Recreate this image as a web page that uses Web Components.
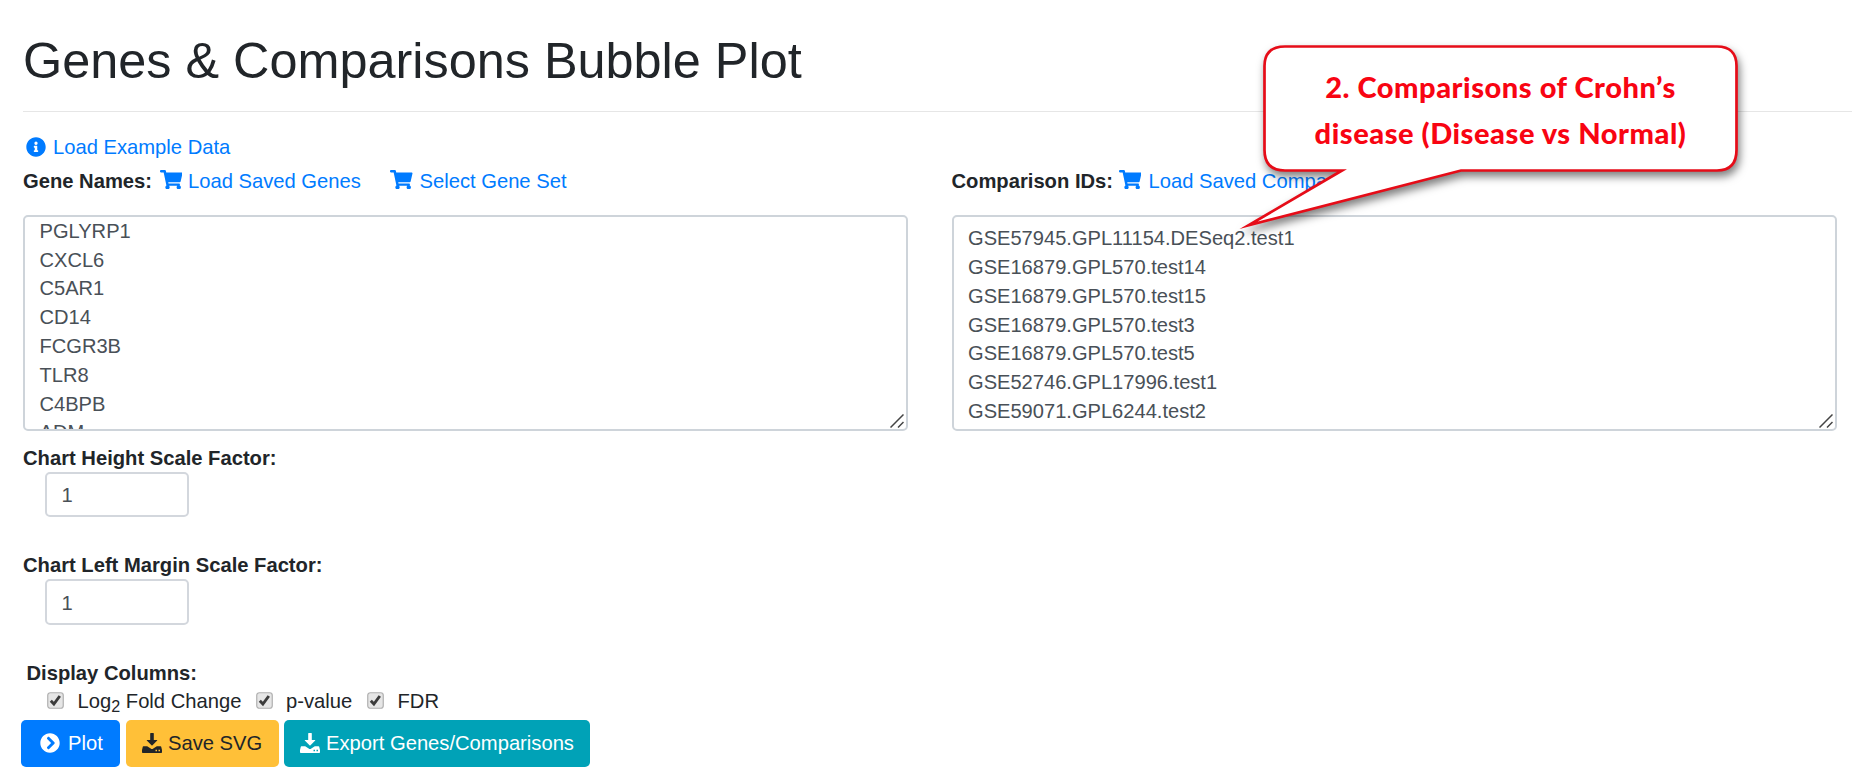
<!DOCTYPE html>
<html lang="en">
<head>
<meta charset="utf-8">
<title>Genes &amp; Comparisons Bubble Plot</title>
<style>
  html, body { margin: 0; background: #fff; }
  body { font: 20.2px/29px "Liberation Sans", Arial, sans-serif; color: #212529; overflow: hidden; }
</style>
</head>
<body>
<bubble-page></bubble-page>
<script>
const icons = {
  info: ['0 0 512 512', '<path d="M256 8C119 8 8 119 8 256s111 248 248 248 248-111 248-248S393 8 256 8zm0 110a42 42 0 1 1 0 84 42 42 0 0 1 0-84zm56 254c0 7-5 12-12 12h-88c-7 0-12-5-12-12v-24c0-7 5-12 12-12h12v-64h-12c-7 0-12-5-12-12v-24c0-7 5-12 12-12h64c7 0 12 5 12 12v100h12c7 0 12 5 12 12z"/>'],
  cart: ['0 0 576 512', '<path d="M528.12 301.319l47.273-208C578.806 78.301 567.391 64 551.99 64H159.208l-9.166-44.81C147.758 8.021 137.93 0 126.529 0H24C10.745 0 0 10.745 0 24v16c0 13.255 10.745 24 24 24h69.883l70.248 343.435C147.325 417.1 136 435.222 136 456c0 30.928 25.072 56 56 56s56-25.072 56-56c0-15.674-6.447-29.835-16.824-40h209.647C430.447 426.165 424 440.326 424 456c0 30.928 25.072 56 56 56s56-25.072 56-56c0-22.172-12.888-41.332-31.579-50.405l5.517-24.276c3.413-15.018-8.002-29.319-23.403-29.319H218.117l-6.545-32h293.145c11.206 0 20.92-7.754 23.403-18.681z"/>'],
  chevron: ['0 0 512 512', '<path d="M256 8c137 0 248 111 248 248S393 504 256 504 8 393 8 256 119 8 256 8zm113.900 231L234.400 103.500c-9.400-9.400-24.600-9.400-33.900 0l-17 17c-9.400 9.400-9.400 24.600 0 33.900L285.100 256 183.500 357.600c-9.400 9.400-9.400 24.600 0 33.900l17 17c9.400 9.400 24.600 9.400 33.900 0L369.900 273c9.400-9.400 9.400-24.600 0-34z"/>'],
  download: ['0 0 20 20', '<path fill-rule="evenodd" d="M8.200.5q0-.5.500-.5h2.600q.5 0 .5.500V7h3.100q.8 0 .3.600l-4.700 4.700q-.5.500-1 0L4.800 7.600Q4.300 7 5.100 7h3.100zM1.400 13.200h3.800l3.500 2.400q1.300 1 2.600 0l3.500-2.400h3.800q.5 0 .6.500l.8 3.300v2.200q0 .8-.8.800H.8q-.8 0-.8-.8V17l.8-3.300q.1-.5.600-.5zM13.500 16.800v1.500H15v-1.500zm3 0v1.500H18v-1.500z"/>']
};

function define(name, html) {
  const t = document.createElement('template');
  t.innerHTML = html;
  customElements.define(name, class extends HTMLElement {
    constructor() {
      super();
      this.attachShadow({ mode: 'open' }).append(t.content.cloneNode(true));
    }
  });
}

customElements.define('fa-icon', class extends HTMLElement {
  connectedCallback() {
    const [box, body] = icons[this.getAttribute('name')];
    const root = this.shadowRoot || this.attachShadow({ mode: 'open' });
    root.innerHTML = `<style>:host{display:block;flex:none;width:20px;height:20px}
      svg{display:block;width:100%;height:100%;fill:currentColor}</style>
      <svg viewBox="${box}" preserveAspectRatio="none">${body}</svg>`;
  }
});

define('action-link', `<style>
  :host { display: flex; align-items: center; color: #007bff; white-space: nowrap; }
</style><slot></slot>`);

define('text-box', `<style>
  :host { display: block; position: relative; box-sizing: border-box; width: 885px; height: 216px;
    border: 2px solid #ced4da; border-radius: 5px; overflow: hidden; color: #495057; background: #fff; }
  .lines { padding-left: 14.500px; font-size: 20.1px; line-height: 28.8px; white-space: pre; margin-top: var(--scroll, 7.800px); }
  svg { position: absolute; right: 2px; bottom: 1px; width: 14px; height: 14px; }
</style>
<div class="lines"><slot></slot></div>
<svg viewBox="0 0 14 14" stroke="#444" stroke-width="1.5" fill="none"><path d="M.5 13.500 13.500.5M8 13.500 13.500 8"/></svg>`);

define('number-box', `<style>
  :host { display: block; box-sizing: border-box; width: 144px; height: var(--h, 45px); margin-left: 22px;
    padding-left: 14.500px; border: 2px solid #d3d7dd; border-radius: 5px; line-height: calc(var(--h, 45px) - 2px); color: #495057; }
</style><slot></slot>`);

define('check-item', `<style>
  :host { display: flex; align-items: center; white-space: nowrap; }
  svg { width: 17px; height: 17px; margin: 0 13.500px 0 0; flex: none; position: relative; top: -1px; }
</style>
<svg viewBox="0 0 17 17">
  <rect x=".75" y=".75" width="15.500" height="15.500" rx="2.500" fill="#e6e6e6" stroke="#b0b0b0" stroke-width="1.200"/>
  <path d="M3.800 8.800 6.900 12 12.800 4" fill="none" stroke="#3c3c3c" stroke-width="2.900"/>
</svg><span><slot></slot></span>`);

define('action-button', `<style>
  :host { display: flex; align-items: center; box-sizing: border-box; height: 47px; border-radius: 5px; white-space: nowrap;
    background: var(--bg); color: var(--fg, #fff); }
</style><slot></slot>`);

define('call-out', `<style>
  :host { display: block; position: absolute; left: 1230px; top: 36px; width: 520px; height: 204px; }
  svg { position: absolute; inset: 0; overflow: visible; filter: drop-shadow(2px 5px 4px rgba(0,0,0,.5)); }
  .t { position: relative; box-sizing: border-box; width: 472px; margin-left: 34.500px; padding-top: 28px; text-align: center;
    font: 900 29px/46px Lato, sans-serif; letter-spacing: .55px; color: #f80412; white-space: nowrap; }
</style>
<svg width="520" height="204" viewBox="0 0 520 204">
  <path d="M55 10.500H487Q506.500 10.500 506.500 30V114Q506.500 134.500 487 134.500H231L18.500 189.300 112 134.500H55Q34.500 134.500 34.500 114V30Q34.500 10.500 55 10.500Z" fill="#fff" stroke="#e60c18" stroke-width="2.700" stroke-miterlimit="8"/>
</svg>
<div class="t"><slot></slot></div>`);

define('bubble-page', `<style>
  :host { display: block; position: relative; height: 776px; box-sizing: border-box; padding: 30px 0 0 23px; overflow: hidden; }
  h1 { margin: 0; font-size: 50.400px; line-height: 61px; font-weight: 400; }
  .rule { height: 1.500px; margin-top: 19.500px; background: #e6e6e6; }
  .example { margin: 20.500px 0 0 2.500px; height: 29px; }
  .example fa-icon { margin-right: 7.500px; }
  .cols { display: grid; grid-template-columns: 928.500px 885px; }
  .head { display: flex; align-items: center; height: 40px; margin-bottom: 13px; }
  b { white-space: nowrap; }
  .head fa-icon { width: 22.500px; height: 19.500px; margin: -4px 6px 0 0; }
  .label { display: block; position: relative; top: 1px; }
  .checks { display: flex; height: 29px; margin-left: 24px; }
  .checks sub { font-size: 80%; line-height: 0; vertical-align: baseline; position: relative; top: 4px; }
  .buttons { display: flex; margin: 4px 0 0 -2px; }
</style>
<h1>Genes &amp; Comparisons Bubble Plot</h1>
<div class="rule"></div>
<action-link class="example"><fa-icon name="info"></fa-icon><span>Load Example Data</span></action-link>
<div class="cols">
  <section>
    <div class="head"><b style="width:136.500px">Gene Names:</b>
      <action-link style="width:230.500px"><fa-icon name="cart"></fa-icon><span>Load Saved Genes</span></action-link>
      <action-link><fa-icon name="cart" style="margin-right:7px"></fa-icon><span>Select Gene Set</span></action-link></div>
    <text-box style="--scroll:.4px"><div>PGLYRP1</div><div>CXCL6</div><div>C5AR1</div><div>CD14</div><div>FCGR3B</div><div>TLR8</div><div>C4BPB</div><div>ADM</div></text-box>
  </section>
  <section>
    <div class="head"><b style="width:167px">Comparison IDs:</b>
      <action-link><fa-icon name="cart" style="margin-right:7.500px"></fa-icon><span>Load Saved Comparisons</span></action-link></div>
    <text-box><div>GSE57945.GPL11154.DESeq2.test1</div><div>GSE16879.GPL570.test14</div><div>GSE16879.GPL570.test15</div><div>GSE16879.GPL570.test3</div><div>GSE16879.GPL570.test5</div><div>GSE52746.GPL17996.test1</div><div>GSE59071.GPL6244.test2</div></text-box>
  </section>
</div>
<b class="label" style="margin-top:12.500px">Chart Height Scale Factor:</b>
<number-box>1</number-box>
<b class="label" style="margin-top:32.500px">Chart Left Margin Scale Factor:</b>
<number-box style="--h:46px">1</number-box>
<b class="label" style="margin:33px 0 0 3.500px">Display Columns:</b>
<div class="checks">
  <check-item style="width:208.500px">Log<sub>2</sub> Fold Change</check-item>
  <check-item style="width:111.500px">p-value</check-item>
  <check-item>FDR</check-item>
</div>
<div class="buttons">
  <action-button style="--bg:#007bff;width:99px;margin-right:6px"><fa-icon name="chevron" style="margin:0 8px 0 19px"></fa-icon><span>Plot</span></action-button>
  <action-button style="--bg:#ffc038;--fg:#212529;width:153px;margin-right:5px"><fa-icon name="download" style="margin:0 6px 0 16px"></fa-icon><span>Save SVG</span></action-button>
  <action-button style="--bg:#00a2b7;width:306px"><fa-icon name="download" style="margin:0 6px 0 16px"></fa-icon><span>Export Genes/Comparisons</span></action-button>
</div>
<call-out><div>2. Comparisons of Crohn’s</div><div>disease (Disease vs Normal)</div></call-out>`);
</script>
</body>
</html>
